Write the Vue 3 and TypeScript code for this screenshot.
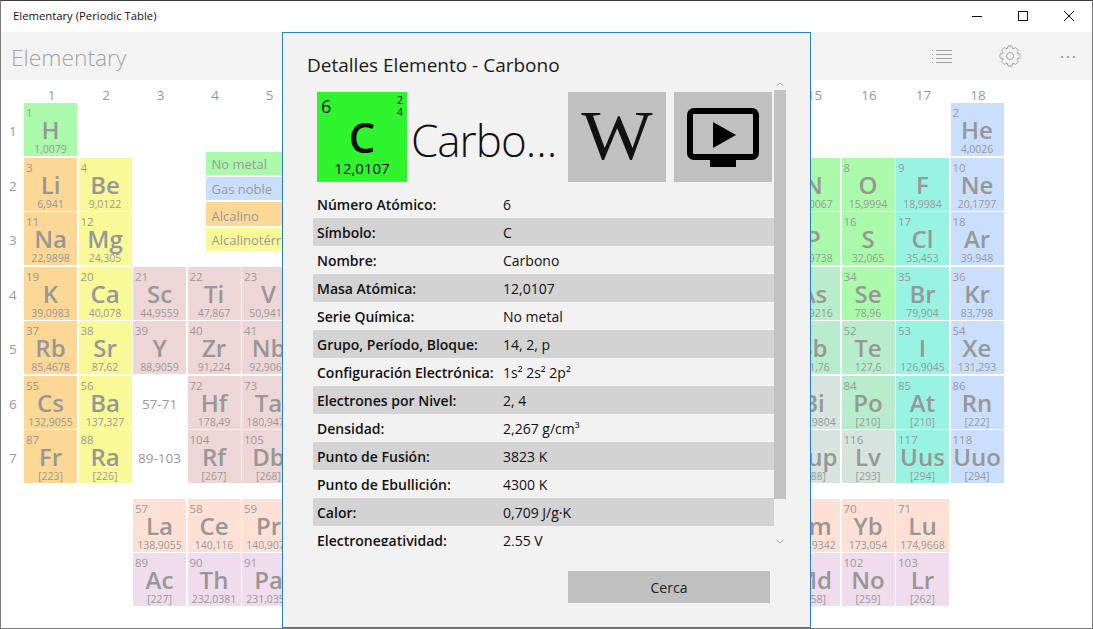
<template>
  <div class="window">
    <header class="titlebar">
      <span class="title">Elementary (Periodic Table)</span>
      <div class="controls">
        <svg width="46" height="31" viewBox="0 0 46 31"><path d="M18 15.5h10" stroke="#111" fill="none" /></svg>
        <svg width="46" height="31" viewBox="0 0 46 31"><rect x="18.5" y="10.5" width="9" height="9" stroke="#111" fill="none" /></svg>
        <svg width="46" height="31" viewBox="0 0 46 31"><path d="M18 10l10 10M28 10l-10 10" stroke="#111" fill="none" /></svg>
      </div>
    </header>

    <div class="appbar">
      <span class="brand">Elementary</span>
      <div class="actions">
        <svg class="act-list" width="20" height="14" viewBox="0 0 20 14">
          <path d="M4 1.5h16M4 5.5h16M4 9.5h16M4 13.5h16" stroke="#a0a0a0" fill="none" />
          <path d="M0 1.5h1M0 5.5h1M0 9.5h1M0 13.5h1" stroke="#a0a0a0" fill="none" />
        </svg>
        <svg class="act-gear" width="22" height="22" viewBox="0 0 22 22">
          <path :d="gearPath" stroke="#a0a0a0" fill="none" />
          <circle cx="11" cy="11" r="3.5" stroke="#a0a0a0" fill="none" />
        </svg>
        <svg class="act-dots" width="14" height="3" viewBox="0 0 14 3">
          <path d="M0 0h2v2H0zM6 0h2v2H6zM12 0h2v2h-2z" fill="#a0a0a0" />
        </svg>
      </div>
    </div>

    <main class="table">
      <span v-for="c in 18" :key="'c' + c" class="axis axis-col" :style="{ gridColumn: c + 1, gridRow: 1 }">{{ c }}</span>
      <span v-for="r in 7" :key="'r' + r" class="axis axis-row" :style="{ gridColumn: 1, gridRow: r + 1 }">{{ r }}</span>

      <div
        v-for="el in elements"
        :key="el.num"
        class="cell"
        :class="el.cat"
        :style="{ gridColumn: el.col + 1, gridRow: el.row + 1 }"
      >
        <span class="num">{{ el.num }}</span>
        <span class="sym">{{ el.sym }}</span>
        <span class="mass">{{ el.mass }}</span>
      </div>

      <span class="range" :style="{ gridColumn: 4, gridRow: 7 }">57-71</span>
      <span class="range" :style="{ gridColumn: 4, gridRow: 8 }">89-103</span>

      <div class="legend">
        <div class="legend-item nm">No metal</div>
        <div class="legend-item ng">Gas noble</div>
        <div class="legend-item al">Alcalino</div>
        <div class="legend-item at">Alcalinotérreo</div>
      </div>
    </main>

    <section class="dialog">
      <h2 class="dialog-title">Detalles Elemento - Carbono</h2>
      <div class="dialog-body">
        <div class="scroll-content">
          <div class="head">
            <div class="tile">
              <div class="tile-top">
                <span class="tile-num">6</span>
                <span class="tile-shells"><i>2</i><i>4</i></span>
              </div>
              <div class="tile-sym">C</div>
              <div class="tile-mass">12,0107</div>
            </div>
            <div class="big-name">Carbono</div>
            <button class="square-btn" type="button"><span class="wiki">W</span></button>
            <button class="square-btn" type="button">
              <svg width="72" height="59" viewBox="0 0 72 59">
                <rect x="3" y="3" width="66" height="46" rx="4" fill="none" stroke="#000" stroke-width="6" />
                <path d="M23 52h26v7H23z" fill="#000" />
                <path d="M26 14l23 13-23 13z" fill="#000" />
              </svg>
            </button>
          </div>
          <div v-for="(p, i) in props" :key="p[0]" class="prop" :class="{ shaded: i % 2 === 1 }">
            <span class="prop-label">{{ p[0] }}</span>
            <span class="prop-value">{{ p[1] }}</span>
          </div>
        </div>
        <div class="scrollbar">
          <svg class="arrow" width="8" height="5" viewBox="0 0 8 5"><path d="M0.5 4L4 1l3.5 3" stroke="#aaa" fill="none" /></svg>
          <div class="thumb"></div>
          <svg class="arrow arrow-down" width="8" height="5" viewBox="0 0 8 5"><path d="M0.5 1L4 4l3.5-3" stroke="#aaa" fill="none" /></svg>
        </div>
      </div>
      <button class="close-btn" type="button">Cerca</button>
    </section>
  </div>
</template>

<script setup lang="ts">
interface Element {
  num: number
  sym: string
  mass: string
  cat: string
  col: number
  row: number
}

// row, first column, first atomic number, then "symbol mass category"
const blocks: [number, number, number, string][] = [
  [1, 1, 1, 'H 1,0079 nm'],
  [1, 18, 2, 'He 4,0026 ng'],
  [2, 1, 3, 'Li 6,941 al|Be 9,0122 at'],
  [2, 13, 5, 'B 10,811 md|C 12,0107 nm|N 14,0067 nm|O 15,9994 nm|F 18,9984 ha|Ne 20,1797 ng'],
  [3, 1, 11, 'Na 22,9898 al|Mg 24,305 at'],
  [3, 13, 13, 'Al 26,9815 pt|Si 28,0855 md|P 30,9738 nm|S 32,065 nm|Cl 35,453 ha|Ar 39,948 ng'],
  [4, 1, 19, 'K 39,0983 al|Ca 40,078 at|Sc 44,9559 tr|Ti 47,867 tr|V 50,9415 tr|Cr 51,9961 tr|Mn 54,938 tr|Fe 55,845 tr|Co 58,9332 tr|Ni 58,6934 tr|Cu 63,546 tr|Zn 65,38 tr|Ga 69,723 pt|Ge 72,64 md|As 74,9216 md|Se 78,96 nm|Br 79,904 ha|Kr 83,798 ng'],
  [5, 1, 37, 'Rb 85,4678 al|Sr 87,62 at|Y 88,9059 tr|Zr 91,224 tr|Nb 92,9064 tr|Mo 95,96 tr|Tc [98] tr|Ru 101,07 tr|Rh 102,9055 tr|Pd 106,42 tr|Ag 107,8682 tr|Cd 112,411 tr|In 114,818 pt|Sn 118,71 pt|Sb 121,76 md|Te 127,6 md|I 126,9045 ha|Xe 131,293 ng'],
  [6, 1, 55, 'Cs 132,9055 al|Ba 137,327 at'],
  [6, 4, 72, 'Hf 178,49 tr|Ta 180,9479 tr|W 183,84 tr|Re 186,207 tr|Os 190,23 tr|Ir 192,217 tr|Pt 195,084 tr|Au 196,9666 tr|Hg 200,59 tr|Tl 204,3833 pt|Pb 207,2 pt|Bi 208,9804 pt|Po [210] md|At [210] ha|Rn [222] ng'],
  [7, 1, 87, 'Fr [223] al|Ra [226] at'],
  [7, 4, 104, 'Rf [267] tr|Db [268] tr|Sg [271] tr|Bh [272] tr|Hs [270] tr|Mt [276] tr|Ds [281] tr|Rg [280] tr|Cn [285] tr|Uut [284] pt|Fl [289] pt|Uup [288] pt|Lv [293] pt|Uus [294] ha|Uuo [294] ng'],
  [9, 3, 57, 'La 138,9055 la|Ce 140,116 la|Pr 140,9076 la|Nd 144,242 la|Pm [145] la|Sm 150,36 la|Eu 151,964 la|Gd 157,25 la|Tb 158,9253 la|Dy 162,5 la|Ho 164,9303 la|Er 167,259 la|Tm 168,9342 la|Yb 173,054 la|Lu 174,9668 la'],
  [10, 3, 89, 'Ac [227] ac|Th 232,0381 ac|Pa 231,0359 ac|U 238,0289 ac|Np [237] ac|Pu [244] ac|Am [243] ac|Cm [247] ac|Bk [247] ac|Cf [251] ac|Es [252] ac|Fm [257] ac|Md [258] ac|No [259] ac|Lr [262] ac'],
]

const elements: Element[] = blocks.flatMap(([row, col, first, list]) =>
  list.split('|').map((item, i) => {
    const [sym, mass, cat] = item.split(' ')
    return { num: first + i, sym, mass, cat, col: col + i, row }
  }),
)

const props: [string, string][] = [
  ['Número Atómico:', '6'],
  ['Símbolo:', 'C'],
  ['Nombre:', 'Carbono'],
  ['Masa Atómica:', '12,0107'],
  ['Serie Química:', 'No metal'],
  ['Grupo, Período, Bloque:', '14, 2, p'],
  ['Configuración Electrónica:', '1s² 2s² 2p²'],
  ['Electrones por Nivel:', '2, 4'],
  ['Densidad:', '2,267 g/cm³'],
  ['Punto de Fusión:', '3823 K'],
  ['Punto de Ebullición:', '4300 K'],
  ['Calor:', '0,709 J/g·K'],
  ['Electronegatividad:', '2,55 V'],
]

// eight toothed gear outline
function buildGear(): string {
  const pts: string[] = []
  const teeth = 8
  for (let i = 0; i < teeth; i++) {
    const a = (i / teeth) * Math.PI * 2
    const step = (Math.PI * 2) / teeth
    const rows: [number, number][] = [
      [7.6, a - step * 0.5],
      [10.2, a - step * 0.24],
      [10.2, a + step * 0.24],
      [7.6, a + step * 0.5],
    ]
    for (const [r, t] of rows) {
      pts.push((11 + r * Math.cos(t)).toFixed(2) + ' ' + (11 + r * Math.sin(t)).toFixed(2))
    }
  }
  return 'M' + pts.join('L') + 'Z'
}
const gearPath = buildGear()
</script>

<style scoped>
.window {
  position: relative;
  width: 1093px;
  height: 629px;
  box-sizing: border-box;
  border: 1px solid #7a7a7a;
  border-top-color: #3c3c3c;
  background: #fff;
  overflow: hidden;
  font-family: "Open Sans", "Noto Sans", sans-serif;
}
.titlebar {
  display: flex;
  justify-content: space-between;
  height: 31px;
}
.title {
  padding-left: 12px;
  font-size: 11.3px;
  line-height: 30px;
  color: #111;
}
.controls {
  display: flex;
}
.appbar {
  display: flex;
  justify-content: space-between;
  align-items: center;
  height: 48px;
  background: #f3f3f3;
}
.brand {
  padding: 3px 0 0 10px;
  font-size: 22.8px;
  font-weight: 300;
  color: #a3a3a3;
}
.actions {
  display: flex;
  align-items: center;
}
.act-list {
  margin-right: 47px;
}
.act-gear {
  margin-right: 40px;
}
.act-dots {
  margin-right: 17px;
  margin-top: 2px;
}
.table {
  display: grid;
  grid-template-columns: 21.5px repeat(18, 53px);
  grid-template-rows: 20.5px repeat(7, 53px) 12.6px repeat(2, 53px);
  gap: 1.5px;
  padding-top: 1px;
}
.axis {
  align-self: center;
  justify-self: center;
  font-size: 13.5px;
  color: #999;
}
.axis-col {
  padding: 8px 0 0 2px;
}
.axis-row {
  padding: 3px 0 0 2px;
}
.cell {
  display: flex;
  flex-direction: column;
  align-items: center;
  padding-top: 3px;
  overflow: hidden;
  color: #999;
}
.num {
  align-self: flex-start;
  padding-left: 2px;
  font-size: 11.5px;
  line-height: 13px;
  height: 11px;
}
.sym {
  font-size: 24px;
  font-weight: 600;
  line-height: 26px;
  color: #979797;
}
.mass {
  font-size: 10.5px;
  line-height: 12px;
}
.range {
  align-self: center;
  justify-self: center;
  padding-top: 3px;
  font-size: 13.5px;
  color: #999;
}
.legend {
  grid-column: 5 / span 9;
  grid-row: 3 / span 2;
  margin: -5.5px 0 0 18px;
  display: flex;
  flex-direction: column;
  gap: 2px;
}
.legend-item {
  height: 23px;
  padding-left: 6px;
  font-size: 13px;
  line-height: 25px;
  color: #999;
}
.legend-item:nth-child(3) {
  height: 24px;
  line-height: 28px;
}
.nm { background: #abf9ab; }
.ng { background: #c9dffd; }
.al { background: #fdd796; }
.at { background: #f9fa97; }
.tr { background: #efd6d6; }
.la { background: #fee0d5; }
.ac { background: #f0dcec; }
.ha { background: #98f3e3; }
.md { background: #b7eccd; }
.pt { background: #d6e4dd; }

.dialog {
  position: absolute;
  left: 281px;
  top: 31px;
  width: 529px;
  height: 596px;
  box-sizing: border-box;
  border: 1px solid #2a7bd0;
  background: #f2f2f2;
}
.dialog-title {
  margin: 0;
  padding: 21px 0 0 24px;
  height: 45px;
  box-sizing: border-box;
  font-size: 19px;
  font-weight: 400;
  line-height: 23px;
  color: #1a1a1a;
}
.dialog-body {
  display: flex;
  margin-left: 30px;
  width: 473px;
  height: 468px;
  overflow: hidden;
}
.scroll-content {
  width: 461px;
  padding-top: 14px;
}
.head {
  display: flex;
  padding-left: 4px;
  margin-bottom: 8px;
}
.tile {
  width: 90px;
  height: 90px;
  flex: none;
  box-sizing: border-box;
  padding: 4px 4px 0;
  background: #2ef52e;
  color: #111;
}
.tile-top {
  display: flex;
  justify-content: space-between;
  height: 26px;
}
.tile-num {
  font-size: 18px;
  line-height: 21px;
}
.tile-shells {
  display: flex;
  flex-direction: column;
  margin-top: -2px;
  font-size: 10.5px;
  line-height: 12px;
}
.tile-shells i {
  font-style: normal;
}
.tile-sym {
  font-size: 42px;
  font-weight: 600;
  line-height: 30px;
  text-align: center;
}
.tile-mass {
  margin-top: 6px;
  font-size: 15px;
  line-height: 20px;
  text-align: center;
}
.big-name {
  width: 157px;
  height: 90px;
  flex: none;
  margin-left: 4px;
  font-size: 44px;
  font-weight: 300;
  letter-spacing: -1px;
  line-height: 96px;
  white-space: nowrap;
  overflow: hidden;
  text-overflow: ellipsis;
  color: #111;
}
.square-btn {
  display: flex;
  align-items: center;
  justify-content: center;
  width: 98px;
  height: 90px;
  flex: none;
  padding: 0;
  margin-right: 8px;
  border: 0;
  background: #c0c0c0;
}
.square-btn:last-child {
  margin-right: 0;
}
.wiki {
  display: block;
  margin-top: -3px;
  font-family: "Liberation Serif", serif;
  font-size: 70px;
  line-height: 70px;
  color: #111;
  transform: scaleX(1.08);
}
.prop {
  display: flex;
  height: 28px;
  padding-left: 4px;
  font-size: 14px;
  line-height: 30px;
  color: #111;
}
.shaded {
  background: #d3d3d3;
}
.prop-label {
  width: 186px;
  flex: none;
  font-weight: 600;
  white-space: nowrap;
}
.scrollbar {
  display: flex;
  flex-direction: column;
  align-items: center;
  width: 12px;
}
.arrow {
  margin-top: 4px;
  height: 5px;
  flex: none;
}
.thumb {
  width: 12px;
  height: 409px;
  margin-top: 3px;
  flex: none;
  background: #c2c2c2;
}
.arrow-down {
  margin-top: 40px;
}
.close-btn {
  display: block;
  width: 202px;
  height: 32px;
  margin: 25px 0 0 285px;
  padding: 0;
  border: 0;
  background: #c0c0c0;
  font-family: inherit;
  font-size: 14px;
  color: #222;
}
</style>
